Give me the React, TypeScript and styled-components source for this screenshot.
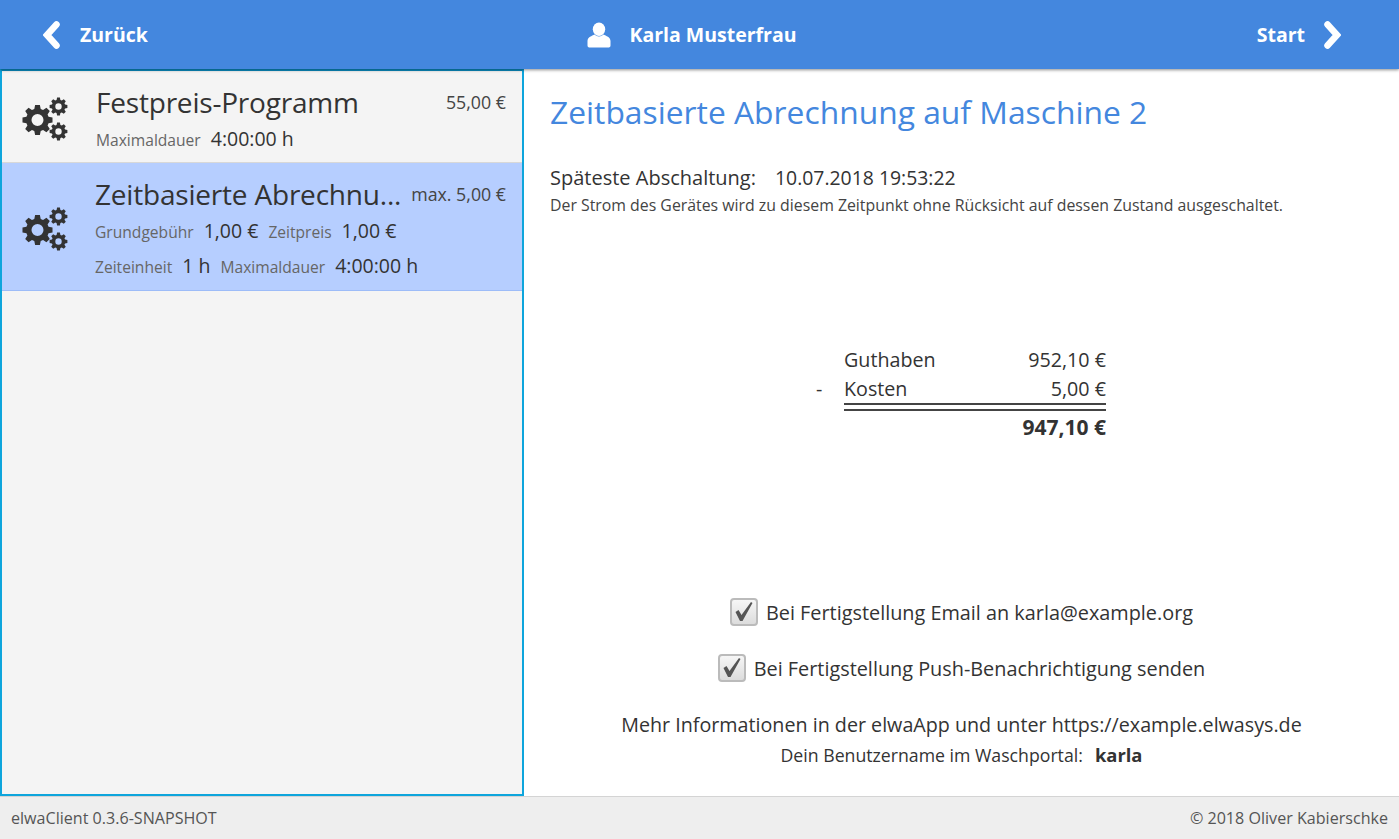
import styled, { createGlobalStyle } from "styled-components";

const GlobalStyle = createGlobalStyle`
  html, body {
    margin: 0;
    height: 100%;
    background: #fff;
    font-family: "Open Sans", "Noto Sans", "Liberation Sans", sans-serif;
    color: #333;
  }
  * { box-sizing: border-box; }
`;

function gearPath(cx: number, cy: number, outer: number, root: number, hole: number, teeth: number) {
  let d = "";
  const step = (Math.PI * 2) / teeth;
  for (let i = 0; i < teeth; i++) {
    const a = i * step - Math.PI / 2;
    const pts = [
      [root, a - step * 0.36],
      [outer, a - step * 0.2],
      [outer, a + step * 0.2],
      [root, a + step * 0.36],
    ];
    pts.forEach(([r, t], j) => {
      const x = (cx + r * Math.cos(t)).toFixed(2);
      const y = (cy + r * Math.sin(t)).toFixed(2);
      d += `${i === 0 && j === 0 ? "M" : "L"}${x} ${y} `;
    });
  }
  d += "Z ";
  d += `M${cx + hole} ${cy} A${hole} ${hole} 0 1 0 ${cx - hole} ${cy} A${hole} ${hole} 0 1 0 ${cx + hole} ${cy} Z`;
  return d;
}

const GearsIcon = () => (
  <GearSvg viewBox="0 0 46 44">
    <path fillRule="evenodd" fill="#333" d={gearPath(15.5, 23, 15.2, 11.5, 6, 8)} />
    <path fillRule="evenodd" fill="#333" d={gearPath(36.5, 9.5, 9, 6.8, 3.2, 8)} />
    <path fillRule="evenodd" fill="#333" d={gearPath(36.5, 34.5, 9, 6.8, 3.2, 8)} />
  </GearSvg>
);

const ChevronLeft = () => (
  <ChevronSvg viewBox="0 0 18 28">
    <path d="M13.5 3.5 L4 14 L13.5 24.5" fill="none" stroke="#fff" strokeWidth="6.5" strokeLinecap="round" strokeLinejoin="miter" />
  </ChevronSvg>
);

const ChevronRight = () => (
  <ChevronSvg viewBox="0 0 18 28">
    <path d="M4.5 3.5 L14 14 L4.5 24.5" fill="none" stroke="#fff" strokeWidth="6.5" strokeLinecap="round" strokeLinejoin="miter" />
  </ChevronSvg>
);

const UserIcon = () => (
  <UserSvg viewBox="0 0 24 26">
    <ellipse cx="12" cy="7.2" rx="6.2" ry="6.7" fill="#fff" />
    <path d="M7.5 12.5 C5 14 0.5 15 0.5 19 V23.5 C0.5 25 1.5 25.5 3 25.5 H21 C22.5 25.5 23.5 25 23.5 23.5 V19 C23.5 15 19 14 16.5 12.5 C14 15 10 15 7.5 12.5 Z" fill="#fff" />
  </UserSvg>
);

const CheckBox = () => (
  <Check>
    <svg viewBox="0 0 24 24" width="24" height="24">
      <path d="M3.5 12 L6.5 10 L9.5 15 L19 2 L20.5 3 L10.5 21 L8 21 Z" fill="#555" />
    </svg>
  </Check>
);

export default function App() {
  return (
    <Page>
      <GlobalStyle />
      <Header>
        <HeaderSide>
          <ChevronLeft />
          <span>Zurück</span>
        </HeaderSide>
        <HeaderUser>
          <UserIcon />
          <span>Karla Musterfrau</span>
        </HeaderUser>
        <HeaderSide $right>
          <span>Start</span>
          <ChevronRight />
        </HeaderSide>
      </Header>
      <Main>
        <ProgramList>
          <ProgramItem>
            <GearsIcon />
            <ProgramBody>
              <TitleRow>
                <ProgramTitle>Festpreis-Programm</ProgramTitle>
                <Price>55,00 €</Price>
              </TitleRow>
              <DetailRow>
                <DetailLabel>Maximaldauer</DetailLabel>
                <DetailValue>4:00:00 h</DetailValue>
              </DetailRow>
            </ProgramBody>
          </ProgramItem>
          <ProgramItem $selected>
            <GearsIcon />
            <ProgramBody>
              <TitleRow>
                <ProgramTitle>Zeitbasierte Abrechnu...</ProgramTitle>
                <Price>max. 5,00 €</Price>
              </TitleRow>
              <DetailRow>
                <DetailLabel>Grundgebühr</DetailLabel>
                <DetailValue>1,00 €</DetailValue>
                <DetailLabel>Zeitpreis</DetailLabel>
                <DetailValue>1,00 €</DetailValue>
              </DetailRow>
              <DetailRow>
                <DetailLabel>Zeiteinheit</DetailLabel>
                <DetailValue>1 h</DetailValue>
                <DetailLabel>Maximaldauer</DetailLabel>
                <DetailValue>4:00:00 h</DetailValue>
              </DetailRow>
            </ProgramBody>
          </ProgramItem>
        </ProgramList>
        <Content>
          <Heading>Zeitbasierte Abrechnung auf Maschine 2</Heading>
          <Shutdown>
            <ShutdownLabel>Späteste Abschaltung:</ShutdownLabel>
            <span>10.07.2018 19:53:22</span>
          </Shutdown>
          <Note>Der Strom des Gerätes wird zu diesem Zeitpunkt ohne Rücksicht auf dessen Zustand ausgeschaltet.</Note>
          <Sum>
            <SumRow>
              <Sign />
              <span>Guthaben</span>
              <Amount>952,10 €</Amount>
            </SumRow>
            <SumRow>
              <Sign>-</Sign>
              <span>Kosten</span>
              <Amount>5,00 €</Amount>
            </SumRow>
            <SumRule />
            <SumRow $total>
              <Sign />
              <span />
              <Amount>947,10 €</Amount>
            </SumRow>
          </Sum>
          <Bottom>
            <CheckRow>
              <CheckBox />
              <span>Bei Fertigstellung Email an karla@example.org</span>
            </CheckRow>
            <CheckRow>
              <CheckBox />
              <span>Bei Fertigstellung Push-Benachrichtigung senden</span>
            </CheckRow>
            <InfoLine>Mehr Informationen in der elwaApp und unter https://example.elwasys.de</InfoLine>
            <UserLine>
              <span>Dein Benutzername im Waschportal:</span>
              <b>karla</b>
            </UserLine>
          </Bottom>
        </Content>
      </Main>
      <Footer>
        <span>elwaClient 0.3.6-SNAPSHOT</span>
        <span>© 2018 Oliver Kabierschke</span>
      </Footer>
    </Page>
  );
}

const Page = styled.div`
  width: 1399px;
  height: 839px;
  display: flex;
  flex-direction: column;
  overflow: hidden;
`;

const Header = styled.header`
  height: 69px;
  flex: none;
  background: #4487de;
  color: #fff;
  display: grid;
  grid-template-columns: 1fr auto 1fr;
  align-items: center;
  padding: 0 58px 0 43px;
  font-size: 19.5px;
  font-weight: 700;
  box-shadow: 0 1px 3px rgba(0, 0, 0, 0.45);
  position: relative;
  z-index: 1;
`;

const HeaderSide = styled.div<{ $right?: boolean }>`
  display: flex;
  align-items: center;
  gap: ${(p) => (p.$right ? "18px" : "19px")};
  justify-content: ${(p) => (p.$right ? "flex-end" : "flex-start")};
`;

const HeaderUser = styled.div`
  display: flex;
  align-items: center;
  gap: 18px;
`;

const ChevronSvg = styled.svg`
  width: 18px;
  height: 28px;
`;

const UserSvg = styled.svg`
  width: 24px;
  height: 26px;
`;

const GearSvg = styled.svg`
  width: 46px;
  height: 44px;
  flex: none;
`;

const Main = styled.main`
  flex: 1;
  display: flex;
  min-height: 0;
`;

const ProgramList = styled.section`
  width: 524px;
  flex: none;
  background: #f4f4f4;
  border: 2px solid #0ea5dc;
  border-top-color: #0a8fc4;
`;

const ProgramItem = styled.article<{ $selected?: boolean }>`
  display: flex;
  align-items: center;
  gap: ${(p) => (p.$selected ? "27px" : "28px")};
  padding: ${(p) => (p.$selected ? "11px 16px 7px 20px" : "11px 16px 5.5px 20px")};
  background: ${(p) => (p.$selected ? "#b6ceff" : "transparent")};
  border-bottom: 1px solid ${(p) => (p.$selected ? "#9dbcf8" : "#d8d8d8")};
`;

const ProgramBody = styled.div`
  flex: 1;
  min-width: 0;
  display: flex;
  flex-direction: column;
`;

const TitleRow = styled.div`
  display: flex;
  justify-content: space-between;
  align-items: flex-start;
`;

const ProgramTitle = styled.h2`
  margin: 0;
  font-size: 28px;
  line-height: 40px;
  font-weight: 400;
  letter-spacing: -0.2px;
  color: #333;
  white-space: nowrap;
`;

const Price = styled.span`
  font-size: 17.8px;
  line-height: 40px;
  color: #444;
`;

const DetailRow = styled.div`
  display: flex;
  align-items: baseline;
  gap: 10px;
  height: 34.5px;
  line-height: 34.5px;
`;

const DetailLabel = styled.span`
  font-size: 15.6px;
  color: #666;
`;

const DetailValue = styled.span`
  font-size: 19.5px;
  color: #333;
`;

const Content = styled.section`
  flex: 1;
  min-width: 0;
  display: flex;
  flex-direction: column;
  padding: 20px 26px 24px 26px;
`;

const Heading = styled.h1`
  margin: 0;
  font-size: 31.8px;
  line-height: 46px;
  font-weight: 400;
  color: #4487de;
`;

const Shutdown = styled.div`
  display: flex;
  gap: 19px;
  margin-top: 30px;
  font-size: 19.4px;
  line-height: 26px;
`;

const ShutdownLabel = styled.span`
  font-size: 20px;
`;

const Note = styled.p`
  margin: 4px 0 0;
  font-size: 15.85px;
  line-height: 20px;
  color: #444;
`;

const Sum = styled.div`
  width: 290px;
  margin: 130px 0 0 266px;
  font-size: 19.7px;
`;

const SumRow = styled.div<{ $total?: boolean }>`
  display: grid;
  grid-template-columns: 28px 1fr auto;
  height: ${(p) => (p.$total ? "32px" : "29px")};
  line-height: ${(p) => (p.$total ? "32px" : "29px")};
  font-weight: ${(p) => (p.$total ? 700 : 400)};
  font-size: ${(p) => (p.$total ? "21px" : "19.7px")};
`;

const Sign = styled.span`
  display: block;
`;

const Amount = styled.span`
  text-align: right;
`;

const SumRule = styled.div`
  height: 8px;
  margin: 0 0 0 28px;
  border-top: 2px solid #444;
  border-bottom: 2px solid #444;
`;

const Bottom = styled.div`
  margin-top: auto;
  display: flex;
  flex-direction: column;
  align-items: center;
`;

const CheckRow = styled.label`
  display: flex;
  align-items: center;
  gap: 8px;
  height: 28px;
  margin-bottom: 28px;
  font-size: 19.85px;
  &:nth-child(2) {
    margin-bottom: 30px;
  }
`;

const Check = styled.span`
  width: 28px;
  height: 28px;
  display: flex;
  align-items: center;
  justify-content: center;
  border: 2px solid #bbb;
  border-radius: 4px;
  background: linear-gradient(#f6f6f6, #dcdcdc);
`;

const InfoLine = styled.div`
  font-size: 19.7px;
  line-height: 26px;
`;

const UserLine = styled.div`
  display: flex;
  align-items: baseline;
  gap: 12px;
  font-size: 17.7px;
  line-height: 34px;
  b {
    font-size: 18.4px;
  }
`;

const Footer = styled.footer`
  height: 43px;
  flex: none;
  display: flex;
  justify-content: space-between;
  align-items: center;
  padding: 0 11px;
  background: #eee;
  border-top: 1px solid #d4d4d4;
  font-size: 16.1px;
  color: #555;
`;
